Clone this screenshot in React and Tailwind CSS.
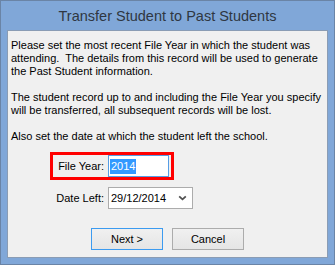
import React from 'react';

const ChevronDown = () => (
  <svg width="9" height="6" viewBox="0 0 9 6" className="block">
    <path d="M1.2 1.4 L4.5 4.4 L7.8 1.4" fill="none" stroke="#505050" strokeWidth="1.8" />
  </svg>
);

const TransferDialog = () => {
  return (
    <div className="w-[335px] h-[265px] bg-[#80a7d8] border border-[#6a84a6] flex flex-col font-['Liberation_Sans',Arial,sans-serif] text-black">
      {/* Title bar */}
      <div className="h-[29px] shrink-0 flex items-center justify-center">
        <span className="text-[14.5px] leading-none text-[#2f3742] pt-[1px]">Transfer Student to Past Students</span>
      </div>

      {/* Client area */}
      <div className="mx-[6px] mb-[6px] flex-1 bg-[#f0f0f0] border border-[#8a9cb4] pt-[8px] pl-[3px] text-[11px] leading-[13px]">
        <p>Please set the most recent File Year in which the student was attending.&nbsp; The details from this record will be used to generate the Past Student information.</p>
        <p className="mt-[13px]">The student record up to and including the File Year you specify will be transferred, all subsequent records will be lost.</p>
        <p className="mt-[13px]">Also set the date at which the student left the school.</p>

        {/* File Year row, highlighted */}
        <div className="mt-[9px] ml-[39px] w-[124px] h-[28px] border-[3px] border-[#ff0000] flex items-center">
          <span className="w-[55px] pr-[4px] text-right">File Year:</span>
          <div className="w-[61px] h-[22px] bg-white border border-[#569de5] flex items-center pl-[1px]">
            <span className="bg-[#3399ff] text-white h-[15px] leading-[15px] px-[1px]">2014</span>
          </div>
        </div>

        {/* Date Left row */}
        <div className="mt-[7px] ml-[42px] flex items-center">
          <span className="w-[55px] pr-[4px] text-right">Date Left:</span>
          <div className="w-[85px] h-[22px] bg-white border border-[#acacac] flex items-center justify-between pl-[2px] pr-[5px]">
            <span>29/12/2014</span>
            <ChevronDown />
          </div>
        </div>

        {/* Buttons */}
        <div className="mt-[19px] flex justify-center gap-[9px] pr-[3px]">
          <button className="w-[72px] h-[22px] border border-[#3c9bf0] bg-gradient-to-b from-[#f0f0f0] to-[#e5e5e5] text-[11px]">Next &gt;</button>
          <button className="w-[72px] h-[22px] border border-[#acacac] bg-gradient-to-b from-[#f0f0f0] to-[#e5e5e5] text-[11px]">Cancel</button>
        </div>
      </div>
    </div>
  );
};

export default function App() {
  return <TransferDialog />;
}
